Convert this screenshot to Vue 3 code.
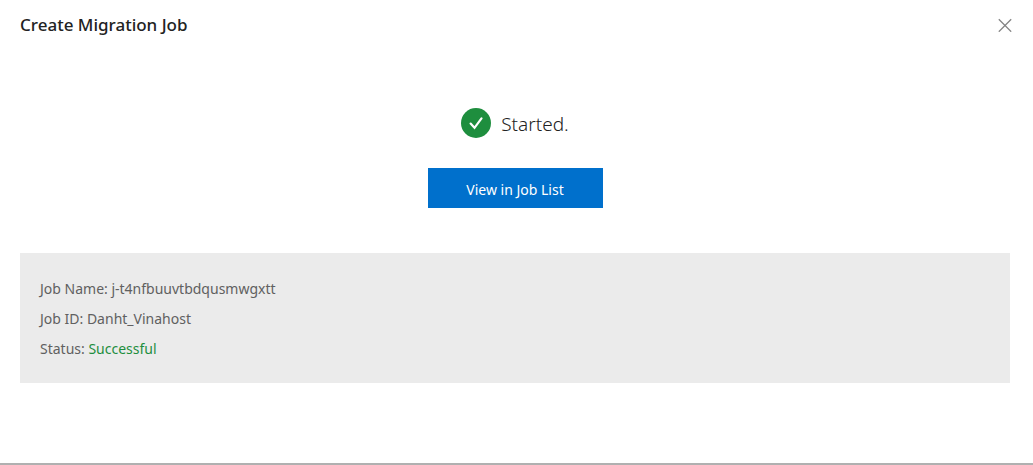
<script setup>
const job = { name: 'j-t4nfbuuvtbdqusmwgxtt', id: 'Danht_Vinahost', status: 'Successful' }
</script>

<template>
  <main class="dialog">
    <header class="head">
      <h1>Create Migration Job</h1>
      <button class="close" type="button" aria-label="Close">
        <svg viewBox="0 0 14 14" width="14" height="14"><path d="M.8 1.3l12.4 12.4M13.2 1.3L.8 13.7" fill="none" stroke="#858585" stroke-width="1.3" /></svg>
      </button>
    </header>
    <section class="result">
      <p class="started">
        <svg viewBox="0 0 30 30" width="30" height="30" aria-hidden="true">
          <circle cx="15" cy="15" r="15" fill="#1e8e3e" />
          <path d="M9.6 15.6l3.9 4.2 7-9.4" fill="none" stroke="#fff" stroke-width="2.2" stroke-linecap="round" />
        </svg>
        <span>Started.</span>
      </p>
      <button class="primary" type="button">View in Job List</button>
    </section>
    <section class="details">
      <p>Job Name: {{ job.name }}</p>
      <p>Job ID: {{ job.id }}</p>
      <p>Status: <span class="ok">{{ job.status }}</span></p>
    </section>
  </main>
</template>

<style>
body { background: #fff; }
</style>

<style scoped>
.dialog {
  box-sizing: border-box;
  min-height: 100vh;
  padding: 0 23px 0 20px;
  border-bottom: 2px solid #b0b0b0;
  font-family: "Segoe UI", "Noto Sans", "Open Sans", sans-serif;
  font-size: 14px;
  color: #606060;
}
.head { display: flex; align-items: center; justify-content: space-between; height: 50px; }
h1 { margin: 0; font-size: 17px; line-height: 24px; font-weight: 500; color: #222; }
.close { display: flex; margin-right: -2px; padding: 0; border: 0; background: none; }
.result { display: flex; flex-direction: column; align-items: center; gap: 30px; padding-top: 58px; }
.started { display: flex; align-items: center; gap: 10px; margin: 0; font-size: 19px; line-height: 28px; color: #222; }
.started span { padding-top: 2px; font-weight: 300; }
.primary { width: 175px; height: 40px; padding: 2px 0 0; border: 0; background: #0070cc; color: #fff; font: inherit; }
.details { margin-top: 45px; padding: 21px 20px 19px; background: #ebebeb; }
.details p { margin: 0; line-height: 30px; }
.ok { color: #1e8e3e; }
</style>
